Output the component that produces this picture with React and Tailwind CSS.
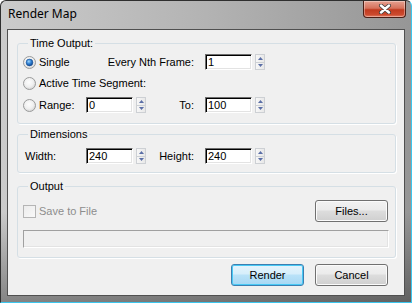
import { useId } from 'react';

function Radio({ checked }) {
  const id = useId().replace(/:/g, '');
  return (
    <svg width="13" height="13" viewBox="0 0 13 13" className="shrink-0">
      <defs>
        <radialGradient id={`bg${id}`} cx="45%" cy="40%" r="60%">
          <stop offset="0" stopColor="#fdfdfd" />
          <stop offset="0.6" stopColor="#f0f0f0" />
          <stop offset="1" stopColor="#d6d6d6" />
        </radialGradient>
        <radialGradient id={`dot${id}`} cx="40%" cy="35%" r="70%">
          <stop offset="0" stopColor="#9fd6fb" />
          <stop offset="0.5" stopColor="#2f7fd2" />
          <stop offset="1" stopColor="#0b3f86" />
        </radialGradient>
      </defs>
      <circle cx="6.5" cy="6.5" r="6" fill={`url(#bg${id})`} stroke="#9a9b9b" />
      {checked && <circle cx="6.5" cy="6.5" r="3.4" fill={`url(#dot${id})`} stroke="#174f94" strokeWidth="0.6" />}
    </svg>
  );
}

function Spinner() {
  return (
    <div className="ml-[3px] flex h-[16px] w-[10px] flex-col border border-[#cdd0d4] bg-[linear-gradient(90deg,#f7f7f7,#e8e8e8)]">
      <div className="flex flex-1 items-center justify-center">
        <svg width="5" height="3" viewBox="0 0 5 3"><path d="M2.5 0L5 3H0z" fill="#5a6ea6" /></svg>
      </div>
      <div className="flex flex-1 items-center justify-center border-t border-[#cdd0d4]">
        <svg width="5" height="3" viewBox="0 0 5 3"><path d="M0 0H5L2.5 3z" fill="#5a6ea6" /></svg>
      </div>
    </div>
  );
}

function NumField({ value }) {
  return (
    <div className="flex w-[60px] shrink-0 items-center">
      <div className="h-[16px] w-[47px] border border-t-[#6d6d6d] border-l-[#6d6d6d] border-r-white border-b-white bg-white pl-[2px] leading-[14px] shadow-[inset_1px_1px_0_#000,inset_-1px_-1px_0_#e3e3e3]">
        {value}
      </div>
      <Spinner />
    </div>
  );
}

function RightLabel({ children }) {
  return (
    <div className="flex w-[59px] shrink-0 justify-end pr-[11px]">
      <span className="shrink-0 whitespace-nowrap">{children}</span>
    </div>
  );
}

function Button({ children, primary }) {
  return (
    <div
      className={
        primary
          ? 'flex h-[22px] w-[73px] items-center justify-center rounded-[3px] border border-[#3c7fb1] bg-[linear-gradient(#e5f4fc,#d6eefb_45%,#b9e2f8_50%,#a6d7f3)] shadow-[inset_0_0_0_1px_#48c9f5]'
          : 'flex h-[22px] w-[73px] items-center justify-center rounded-[3px] border border-[#707070] bg-[linear-gradient(#f2f2f2,#ebebeb_45%,#dddddd_50%,#cfcfcf)] shadow-[inset_0_0_0_1px_#fbfbfb]'
      }
    >
      {children}
    </div>
  );
}

export default function App() {
  return (
    <div className="flex h-[303px] w-[412px] flex-col overflow-hidden rounded-t-[6px] border border-[#2f2f2f] border-r-[#3cc6ee] border-b-[#3cc6ee] bg-[linear-gradient(180deg,rgba(0,0,0,0)_70%,rgba(0,0,0,0.35)),linear-gradient(90deg,#cbcbcb,#b3b3b3_50%,#969696)] font-['Liberation_Sans',Arial,sans-serif] text-[11px] leading-[13px] text-black">
      {/* title bar */}
      <div className="flex h-[28px] shrink-0 items-start justify-between pl-[7px]">
        <span className="mt-[5px] font-['Noto_Sans',sans-serif] text-[12px] leading-[16px]">Render Map</span>
        <div className="mr-[5px] flex h-[17px] w-[43px] items-center justify-center rounded-b-[4px] border border-t-0 border-[#4b1f16] bg-[linear-gradient(#e6a191,#d6725c_45%,#c13a1f_55%,#cc4a2e_85%,#e37f66)] shadow-[inset_0_0_0_1px_rgba(255,255,255,0.35)]">
          <svg width="14" height="10" viewBox="0 0 14 10">
            <path d="M3 1.5L11 8.5M11 1.5L3 8.5" stroke="#3d3d3d" strokeWidth="4" strokeLinecap="round" />
            <path d="M3 1.5L11 8.5M11 1.5L3 8.5" stroke="#ffffff" strokeWidth="2.4" strokeLinecap="round" />
          </svg>
        </div>
      </div>

      {/* client area */}
      <div className="mx-[6px] mb-[6px] flex flex-1 flex-col border border-[#505050] bg-[#f0f0f0] pl-[9px] pr-[8px] pt-[7px]">
        <fieldset className="rounded-[3px] border border-[#d5dfe5] pb-[8px] pl-[5px] pt-[2px] shadow-[1px_1px_0_#fff]">
          <legend className="ml-[5px] px-[2px]">Time Output:</legend>
          <div className="flex h-[20px] items-center">
            <div className="flex w-[123px] shrink-0 items-center">
              <Radio checked />
              <span className="ml-[3px]">Single</span>
            </div>
            <RightLabel>Every Nth Frame:</RightLabel>
            <NumField value="1" />
          </div>
          <div className="mt-[1px] flex h-[20px] items-center">
            <Radio />
            <span className="ml-[3px]">Active Time Segment:</span>
          </div>
          <div className="mt-[2px] flex h-[20px] items-center">
            <div className="flex w-[63px] shrink-0 items-center">
              <Radio />
              <span className="ml-[3px]">Range:</span>
            </div>
            <NumField value="0" />
            <RightLabel>To:</RightLabel>
            <NumField value="100" />
          </div>
        </fieldset>

        <fieldset className="mt-[4px] rounded-[3px] border border-[#d5dfe5] pb-[6px] pl-[5px] pt-[5px] shadow-[1px_1px_0_#fff]">
          <legend className="ml-[5px] px-[2px]">Dimensions</legend>
          <div className="flex h-[20px] items-center">
            <span className="w-[63px] shrink-0 pl-[2px]">Width:</span>
            <NumField value="240" />
            <RightLabel>Height:</RightLabel>
            <NumField value="240" />
          </div>
        </fieldset>

        <fieldset className="mt-[7px] rounded-[3px] border border-[#d5dfe5] pb-[9px] pl-[5px] pr-[6px] pt-[7px] shadow-[1px_1px_0_#fff]">
          <legend className="ml-[5px] px-[2px]">Output</legend>
          <div className="flex h-[22px] items-center justify-between">
            <div className="flex items-center text-[#8d8d8d]">
              <div className="h-[13px] w-[13px] border border-[#b5b5b5] bg-[linear-gradient(135deg,#ececec,#f9f9f9)]" />
              <span className="ml-[3px]">Save to File</span>
            </div>
            <div className="mr-[1px]">
              <Button>Files...</Button>
            </div>
          </div>
          <div className="mt-[8px] h-[18px] border border-t-[#a0a0a0] border-l-[#a0a0a0] border-r-white border-b-white bg-[#f0f0f0] shadow-[inset_-1px_-1px_0_#e3e3e3]" />
        </fieldset>

        <div className="mt-[6px] flex justify-end gap-[11px] pr-[8px]">
          <Button primary>Render</Button>
          <Button>Cancel</Button>
        </div>
      </div>
    </div>
  );
}
